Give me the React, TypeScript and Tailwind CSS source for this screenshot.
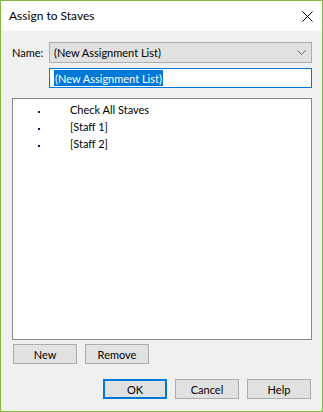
import type { ReactNode } from "react";

const staves = ["Check All Staves", "[Staff 1]", "[Staff 2]"];

export default function App() {
  return (
    <div className="flex h-[412px] w-[323px] flex-col border border-[#84b83e] font-['Lato','Noto_Sans',sans-serif] text-[11px] leading-none text-black">
      <div className="flex h-[30px] items-center justify-between bg-white pl-[8px] pr-[9px]">
        <span className="text-[12px]">Assign to Staves</span>
        <svg width="11" height="11" viewBox="0 0 11 11" aria-hidden="true">
          <path d="M0.5 0.5 L10.5 10.5 M10.5 0.5 L0.5 10.5" stroke="#000" strokeWidth="1" />
        </svg>
      </div>

      <div className="flex flex-1 flex-col bg-[#f0f0f0] pl-[11px] pr-[10px]">
        <div className="mt-[11px] flex h-[21px] items-center">
          <span className="w-[37px]">Name:</span>
          <div className="flex h-[21px] flex-1 items-center justify-between border border-[#adadad] bg-[#e1e1e1] pl-[4px] pr-[5px]">
            <span>(New Assignment List)</span>
            <svg width="9" height="5" viewBox="0 0 9 5" aria-hidden="true">
              <path d="M0.5 0.5 L4.5 4.5 L8.5 0.5" fill="none" stroke="#606060" strokeWidth="1" />
            </svg>
          </div>
        </div>

        <div className="mt-[5px] ml-[37px] flex h-[20px] items-center border border-[#0078d7] bg-white pl-[4px]">
          <span className="bg-[#0078d7] px-[1px] py-[2.5px] text-white">(New Assignment List)</span>
        </div>

        <div className="mt-[10px] h-[242px] border border-[#828790] bg-white pt-[2px]">
          {staves.map((name) => (
            <div className="flex h-[17px] items-center" key={name}>
              <span className="ml-[25px] mt-[5px] h-[2px] w-[2px] bg-[#1a1a6e]" />
              <span className="ml-[30px]">{name}</span>
            </div>
          ))}
        </div>

        <div className="mt-[4px] flex gap-[8px] pl-[1px]">
          <DialogButton>New</DialogButton>
          <DialogButton>Remove</DialogButton>
        </div>

        <div className="mt-[15px] flex justify-end gap-[8px] pr-[1px]">
          <DialogButton primary>OK</DialogButton>
          <DialogButton>Cancel</DialogButton>
          <DialogButton>Help</DialogButton>
        </div>
      </div>
    </div>
  );
}

function DialogButton({ children, primary }: { children: ReactNode; primary?: boolean }) {
  return (
    <button
      className={
        primary
          ? "grid h-[20px] w-[64px] place-items-center border-2 border-[#0078d7] bg-[#e1e1e1]"
          : "grid h-[20px] w-[64px] place-items-center border border-[#adadad] bg-[#e1e1e1]"
      }
      type="button"
    >
      {children}
    </button>
  );
}
